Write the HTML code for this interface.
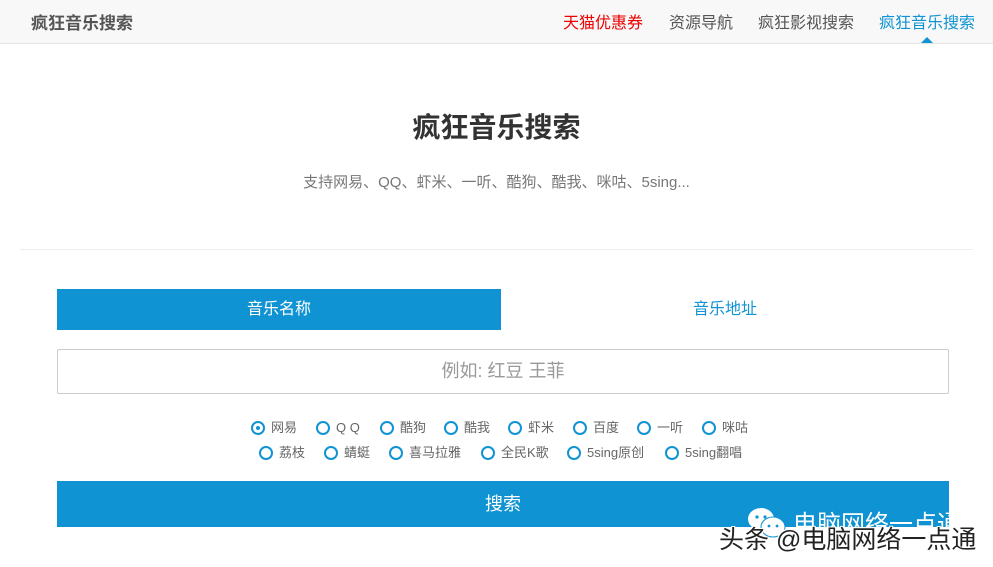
<!DOCTYPE html>
<html><head><meta charset="utf-8"><style>
*{margin:0;padding:0;box-sizing:border-box}
body{width:993px;height:567px;background:#fff;font-family:"Liberation Sans","Noto Sans CJK SC",sans-serif;position:relative;overflow:hidden}
.hd{position:absolute;left:0;top:0;width:993px;height:44px;background:#f8f8f8;border-bottom:1px solid #e4e4e4}
.a{position:absolute;top:9px;font-size:16px}
.t{position:absolute;left:0;width:993px;text-align:center}
.r{position:absolute;font-size:13px;color:#666;display:flex;align-items:center;height:16px;line-height:16px}
.r i{display:inline-block;width:14px;height:14px;border:2px solid #1093d2;border-radius:50%;margin-right:6px;position:relative;flex:none}
.r i.on::after{content:"";position:absolute;left:3px;top:3px;width:4px;height:4px;border-radius:50%;background:#1093d2}
</style></head><body>
<div class="hd">
<div class="a" style="left:31px;font-size:17px;font-weight:bold;color:#555">疯狂音乐搜索</div>
<div class="a" style="left:563px;color:#e00">天猫优惠券</div>
<div class="a" style="left:669px;color:#555">资源导航</div>
<div class="a" style="left:758px;color:#555">疯狂影视搜索</div>
<div class="a" style="left:879px;color:#1093d2">疯狂音乐搜索</div>
<div style="position:absolute;left:921px;top:37px;width:0;height:0;border:6px solid transparent;border-bottom-color:#1093d2;border-top:0"></div>
</div>
<div class="t" style="top:106px;font-size:28px;font-weight:bold;color:#333">疯狂音乐搜索</div>
<div class="t" style="top:171px;font-size:15px;color:#777">支持网易、QQ、虾米、一听、酷狗、酷我、咪咕、5sing...</div>
<div style="position:absolute;left:20px;top:249px;width:953px;height:1px;background:#eee"></div>
<div style="position:absolute;left:57px;top:289px;width:444px;height:41px;background:#1093d2;color:#fff;font-size:16px;text-align:center;line-height:41px">音乐名称</div>
<div style="position:absolute;left:501px;top:289px;width:448px;height:41px;color:#1093d2;font-size:16px;text-align:center;line-height:41px">音乐地址</div>
<div style="position:absolute;left:57px;top:349px;width:892px;height:45px;border:1px solid #ccc;border-radius:2px;color:#999;font-size:18px;text-align:center;line-height:43px">例如: 红豆 王菲</div>
<div class="r" style="left:251px;top:420px"><i class="on"></i>网易</div>
<div class="r" style="left:316px;top:420px"><i></i>Q Q</div>
<div class="r" style="left:380px;top:420px"><i></i>酷狗</div>
<div class="r" style="left:444px;top:420px"><i></i>酷我</div>
<div class="r" style="left:508px;top:420px"><i></i>虾米</div>
<div class="r" style="left:573px;top:420px"><i></i>百度</div>
<div class="r" style="left:637px;top:420px"><i></i>一听</div>
<div class="r" style="left:702px;top:420px"><i></i>咪咕</div>
<div class="r" style="left:259px;top:445px"><i></i>荔枝</div>
<div class="r" style="left:324px;top:445px"><i></i>蜻蜓</div>
<div class="r" style="left:389px;top:445px"><i></i>喜马拉雅</div>
<div class="r" style="left:481px;top:445px"><i></i>全民K歌</div>
<div class="r" style="left:567px;top:445px"><i></i>5sing原创</div>
<div class="r" style="left:665px;top:445px"><i></i>5sing翻唱</div>
<div style="position:absolute;left:57px;top:481px;width:892px;height:46px;background:#1093d2;color:#fff;font-size:18px;text-align:center;line-height:46px">搜索</div>
<svg style="position:absolute;left:745px;top:505px" width="44" height="34" viewBox="0 0 44 34"><ellipse cx="16" cy="14" rx="13" ry="11" fill="#fff"/><ellipse cx="28" cy="22" rx="12" ry="10" fill="#fff" stroke="#1093d2" stroke-width="1"/><circle cx="12" cy="12" r="1.6" fill="#1093d2"/><circle cx="20" cy="12" r="1.6" fill="#1093d2"/><circle cx="24" cy="21" r="1.4" fill="#1093d2"/><circle cx="32" cy="21" r="1.4" fill="#1093d2"/></svg>
<div style="position:absolute;left:793px;top:504px;font-size:24px;color:#fff">电脑网络一点通</div>
<div style="position:absolute;left:719px;top:520px;font-size:25px;color:#222;text-shadow:1px 1px 0 #fff,-1px -1px 0 #fff,1px -1px 0 #fff,-1px 1px 0 #fff">头条 @电脑网络一点通</div>
</body></html>
